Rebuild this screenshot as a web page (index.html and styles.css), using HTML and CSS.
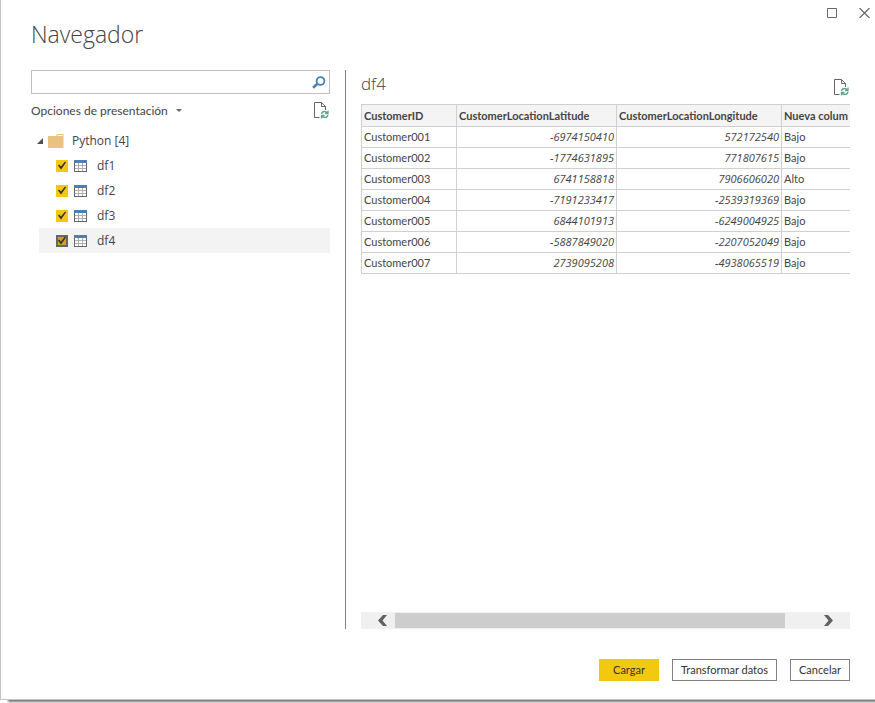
FILE: index.html
```html
<!DOCTYPE html>
<html lang="es">
<head>
<meta charset="utf-8">
<title>Navegador</title>
<link rel="stylesheet" href="styles.css">
</head>
<body>
<svg class="defs" aria-hidden="true">
  <symbol id="refresh" viewBox="0 0 15 17">
    <path d="M5.5 15.5H.5V.5h7l4 4V8M7.5.5v4h4" fill="none" stroke="#666"/>
    <path d="M7.5 12c.3-2 1-2.500 3-2.500 1.500 0 2.200.5 3 1.500M14 8.500v3h-3M14 13c-.5 2-1.500 2.500-3.200 2.500-1.500 0-2.200-.5-3-1.500M7.500 16.500v-3h3" fill="none" stroke="#5fa48a" stroke-width="1.300"/>
  </symbol>
  <symbol id="grid" viewBox="0 0 13 12">
    <path d="M0 0h13v12H0z" fill="#666"/>
    <path d="M0 0h13v3H0z" fill="#4a80ba"/>
    <path d="M1 3h11v8H1z" fill="#b0b0b0"/>
    <path d="M1 3h3v2H1zM5 3h3v2H5zM9 3h3v2H9zM1 6h3v2H1zM5 6h3v2H5zM9 6h3v2H9zM1 9h3v2H1zM5 9h3v2H5zM9 9h3v2H9z" fill="#fff"/>
  </symbol>
</svg>
<div class="dialog">
  <div class="caption">
    <button class="icon-btn" aria-label="Maximizar"><svg width="10" height="10"><path d="M.5.5h9v9h-9z" fill="none" stroke="#666"/></svg></button>
    <button class="icon-btn" aria-label="Cerrar"><svg width="11" height="10"><path d="M.5 0l10 10M10.500 0l-10 10" fill="none" stroke="#666" stroke-width="1.200"/></svg></button>
  </div>
  <h1>Navegador</h1>
  <main class="panes">
    <section class="sidebar">
      <div class="search">
        <input type="text" aria-label="Buscar">
        <button class="icon-btn" aria-label="Buscar"><svg width="14" height="13"><circle cx="8.500" cy="5" r="3.900" fill="none" stroke="#4a80ba" stroke-width="1.800"/><path d="M5.800 7.600L1 11.800" stroke="#4a80ba" stroke-width="2.600"/></svg></button>
      </div>
      <div class="options">
        <button class="options-btn">Opciones de presentación <svg width="6" height="4"><path d="M0 0h6L3 3z" fill="#666"/></svg></button>
        <button class="icon-btn" aria-label="Actualizar"><svg width="15" height="17"><use href="#refresh"/></svg></button>
      </div>
      <ul class="tree">
        <li class="folder">
          <svg width="6" height="6"><path d="M6 0v6H0z" fill="#505050"/></svg>
          <svg width="16" height="14"><path d="M0 2h8l1-2h6.500v14H0z" fill="#e9c282"/><path d="M9.500 1h5v1h-5z" fill="#fff"/></svg>
          <span>Python [4]</span>
        </li>
        <li><label class="item"><input type="checkbox" checked><svg width="13" height="12"><use href="#grid"/></svg>df1</label></li>
        <li><label class="item"><input type="checkbox" checked><svg width="13" height="12"><use href="#grid"/></svg>df2</label></li>
        <li><label class="item"><input type="checkbox" checked><svg width="13" height="12"><use href="#grid"/></svg>df3</label></li>
        <li><label class="item selected"><input type="checkbox" checked><svg width="13" height="12"><use href="#grid"/></svg>df4</label></li>
      </ul>
    </section>
    <section class="preview">
      <header class="preview-head">
        <h2>df4</h2>
        <button class="icon-btn" aria-label="Actualizar vista previa"><svg width="15" height="17"><use href="#refresh"/></svg></button>
      </header>
      <div class="table-wrap">
        <table>
          <colgroup><col class="c-id"><col class="c-lat"><col class="c-lon"><col class="c-new"></colgroup>
          <thead><tr><th>CustomerID</th><th>CustomerLocationLatitude</th><th>CustomerLocationLongitude</th><th>Nueva colum</th></tr></thead>
          <tbody>
            <tr><td>Customer001</td><td class="num">-6974150410</td><td class="num">572172540</td><td>Bajo</td></tr>
            <tr><td>Customer002</td><td class="num">-1774631895</td><td class="num">771807615</td><td>Bajo</td></tr>
            <tr><td>Customer003</td><td class="num">6741158818</td><td class="num">7906606020</td><td>Alto</td></tr>
            <tr><td>Customer004</td><td class="num">-7191233417</td><td class="num">-2539319369</td><td>Bajo</td></tr>
            <tr><td>Customer005</td><td class="num">6844101913</td><td class="num">-6249004925</td><td>Bajo</td></tr>
            <tr><td>Customer006</td><td class="num">-5887849020</td><td class="num">-2207052049</td><td>Bajo</td></tr>
            <tr><td>Customer007</td><td class="num">2739095208</td><td class="num">-4938065519</td><td>Bajo</td></tr>
          </tbody>
        </table>
      </div>
      <div class="scrollbar">
        <button class="icon-btn" aria-label="Desplazar a la izquierda"><svg width="9" height="11"><path d="M5 0h4L4.500 5.500 9 11H5L0 5.500z" fill="#606060"/></svg></button>
        <div class="track"><div class="thumb"></div></div>
        <button class="icon-btn" aria-label="Desplazar a la derecha"><svg width="9" height="11"><path d="M4 0H0l4.500 5.500L0 11h4l5-5.500z" fill="#606060"/></svg></button>
      </div>
    </section>
  </main>
  <footer class="actions">
    <button class="btn primary">Cargar</button>
    <button class="btn wide">Transformar datos</button>
    <button class="btn">Cancelar</button>
  </footer>
</div>
</body>
</html>
```

FILE: styles.css
```css
* { box-sizing: border-box; }
body {
  margin: 0;
  height: 100vh;
  display: flex;
  flex-direction: column;
  overflow: hidden;
  background: #fff;
  color: #444;
  font: 12px/16px "Open Sans", "Noto Sans", sans-serif;
}
.defs { position: absolute; width: 0; height: 0; }
svg { display: block; flex: none; }
button { font: inherit; color: inherit; margin: 0; padding: 0; border: 0; background: none; }
.icon-btn { display: flex; align-items: center; justify-content: center; }
.dialog {
  flex: 1;
  min-height: 0;
  margin-bottom: 3px;
  display: flex;
  flex-direction: column;
  padding: 8px 25px 18px 30px;
  border-left: 1px solid #c4c4c4;
  border-bottom: 1px solid #c4c4c4;
  box-shadow: 8px 2px 2px #777;
}
.caption { display: flex; justify-content: flex-end; gap: 22px; height: 10px; margin-right: -20px; }
h1 { margin: 0; height: 52px; font-size: 23px; line-height: 32px; font-weight: 300; }
.panes { flex: 1; min-height: 0; display: grid; grid-template-columns: 299px minmax(0, 1fr); column-gap: 15px; }
.search { display: flex; align-items: center; height: 24px; padding-right: 3px; border: 1px solid #c0c0c0; }
.search input { flex: 1; min-width: 0; height: 22px; border: 0; outline: 0; font: inherit; background: none; }
.options { display: flex; align-items: center; justify-content: space-between; height: 33px; margin-bottom: 1px; padding-right: 1px; }
.options-btn { display: flex; align-items: center; gap: 8px; font-family: Lato, "Open Sans", sans-serif; font-size: 12px; }
.tree { list-style: none; margin: 0; padding: 0 0 0 8px; }
.folder { display: flex; align-items: center; height: 25px; gap: 5px; margin-left: -2px; }
.folder span { margin-left: 3px; }
.item { display: flex; align-items: center; height: 25px; padding-left: 17px; }
.item svg { margin: 0 10px 0 6px; }
.selected { background: #f3f3f3; }
.item input { appearance: none; width: 12px; height: 12px; margin: 0; background: #f2c811; }
.item input::before {
  content: "";
  display: block;
  width: 12px;
  height: 12px;
  background: #333;
  clip-path: polygon(2px 6px, 3px 5px, 5px 7px, 9px 2px, 10px 3px, 5px 10px);
}
.item.selected input { background: #cda21c; box-shadow: inset 0 0 0 2px #666; }
.preview { display: flex; flex-direction: column; min-width: 0; padding-left: 15px; border-left: 1px solid #808080; }
.preview-head { display: flex; align-items: center; justify-content: space-between; height: 34px; padding-right: 1px; }
h2 { margin: 0 0 6px; font-size: 17px; line-height: 24px; font-weight: 300; }
.table-wrap { flex: 1; min-height: 0; overflow: hidden; font-size: 11px; font-family: Lato, "Open Sans", sans-serif; }
table { width: 580px; table-layout: fixed; border-collapse: collapse; }
.c-id { width: 95px; }
.c-lat { width: 160px; }
.c-lon { width: 165px; }
.c-new { width: 160px; }
th, td { height: 21px; padding: 0 2px; border: 1px solid #d0d0d0; text-align: left; white-space: nowrap; }
th { height: 22px; background: #f4f4f4; font-weight: 700; }
.num { text-align: right; font-style: italic; font-family: "Open Sans", sans-serif; }
.scrollbar { display: flex; align-items: center; height: 17px; background: #f0f0f0; }
.scrollbar .icon-btn { width: 34px; height: 17px; padding-left: 9px; }
.scrollbar .icon-btn:last-child { padding: 0 0 0 1px; width: 44px; }
.track { flex: 1; height: 15px; }
.thumb { width: 95%; height: 15px; background: #cdcdcd; }
.actions { display: flex; justify-content: flex-end; gap: 13px; margin-top: 30px; font-size: 11px; font-family: Lato, "Open Sans", sans-serif; color: #333; }
.btn { min-width: 60px; height: 22px; border: 1px solid #808080; background: #fff; }
.btn.wide { min-width: 105px; }
.btn.primary { background: #f2c811; border-color: #f2c811; }
```
